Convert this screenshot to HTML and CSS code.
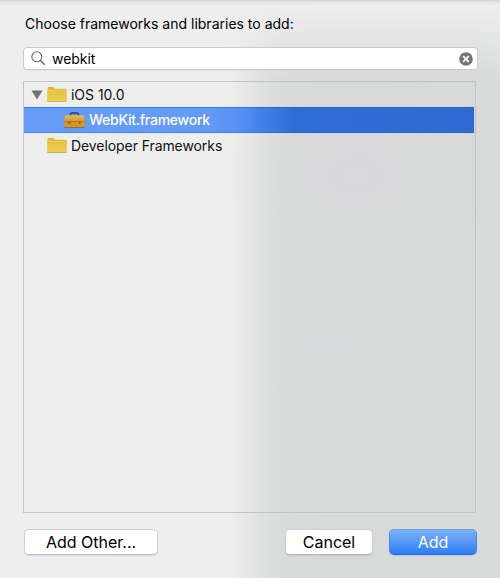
FILE: index.html
```html
<!DOCTYPE html>
<html lang="en">
<head>
<meta charset="utf-8">
<title>Choose frameworks and libraries</title>
<link rel="stylesheet" href="styles.css">
</head>
<body>
<main class="sheet">
  <h1 class="title"><span>Choose frameworks and libraries to add:</span></h1>
  <div class="search">
    <svg class="magnifier" width="15" height="15" viewBox="0 0 15 15"><circle cx="5.8" cy="5.8" r="5" fill="none" stroke="#646464" stroke-width="1.1"/><path d="M9.5 9.5L13.8 13.7" stroke="#646464" stroke-width="1.3"/></svg>
    <span class="query">webkit</span>
    <svg class="clear" width="14" height="14" viewBox="0 0 14 14"><circle cx="7" cy="7" r="6.8" fill="#757575"/><path d="M4.2 4.2L9.8 9.8M9.8 4.2L4.2 9.8" stroke="#fff" stroke-width="1.9"/></svg>
  </div>
  <div class="list">
    <div class="row">
      <svg class="disclosure" width="12" height="10" viewBox="0 0 12 10"><path d="M.5 .5H11.5L6 9.5Z" fill="#717171"/></svg>
      <svg class="folder" width="20" height="17" viewBox="0 0 20 17"><defs><linearGradient id="folderFill" x2="0" y2="1"><stop stop-color="#e6c238"/><stop offset="1" stop-color="#edcf57"/></linearGradient></defs><path d="M.5 2Q.5 1 1.5 1H6L8 2.8H18.5Q19.5 2.8 19.5 3.8V15H.5Z" fill="#ddb838"/><path d="M.5 4.3H19.5V15H.5Z" fill="url(#folderFill)"/><path d="M.5 4.3H19.5" stroke="#efd66b" stroke-width=".7"/><path d="M.3 15.4H19.7" stroke="#c9a94e" stroke-width="1"/></svg>
      <span class="ios">iOS 10.0</span>
    </div>
    <div class="row selected">
      <svg class="toolbox" width="21" height="17" viewBox="0 0 21 17"><defs><linearGradient id="caseFill" x2="0" y2="1"><stop stop-color="#ebbb4d"/><stop offset=".5" stop-color="#d4982c"/><stop offset="1" stop-color="#cf9230"/></linearGradient></defs><path d="M6.5 4V2.7Q6.5 1 8.2 1H12.8Q14.5 1 14.5 2.7V4" fill="none" stroke="#263e63" stroke-width="1.4"/><path d="M2.2 3.2H18.8Q20 3.2 20.3 5L20.8 10V15.8H.2V10L.7 5Q1 3.2 2.2 3.2Z" fill="url(#caseFill)"/><path d="M.3 9.6H20.7" stroke="#a66f22" stroke-width=".9"/><path d="M.2 15.6H20.8" stroke="#8c642d" stroke-width=".9"/><path d="M4 10.2H6.5L5.2 12.3ZM14.5 10.2H17L15.8 12.3Z" fill="#5d4b36"/></svg>
      <span class="webkit">WebKit.framework</span>
    </div>
    <div class="row developer">
      <svg class="folder" width="20" height="17" viewBox="0 0 20 17"><path d="M.5 2Q.5 1 1.5 1H6L8 2.8H18.5Q19.5 2.8 19.5 3.8V15H.5Z" fill="#ddb838"/><path d="M.5 4.3H19.5V15H.5Z" fill="url(#folderFill)"/><path d="M.5 4.3H19.5" stroke="#efd66b" stroke-width=".7"/><path d="M.3 15.4H19.7" stroke="#c9a94e" stroke-width="1"/></svg>
      <span class="dev">Developer Frameworks</span>
    </div>
  </div>
  <footer class="actions">
    <button class="button other"><span>Add Other...</span></button>
    <button class="button cancel"><span>Cancel</span></button>
    <button class="button primary"><span>Add</span></button>
  </footer>
</main>
</body>
</html>
```
FILE: styles.css
```css
* { box-sizing: border-box; }
body {
  margin: 0;
  font-family: Inter, "Liberation Sans", sans-serif;
  color: #111;
}
.sheet {
  width: 500px;
  height: 578px;
  padding: 14px 22px 0 23px;
  background:
    linear-gradient(#d2d2d2, rgba(225, 225, 225, .6) 2px, rgba(238, 238, 238, 0) 5px),
    linear-gradient(#eee 5px, rgba(238, 238, 238, .75) 25px, rgba(238, 238, 238, 0) 80px),
    linear-gradient(90deg, #eee 230px, rgba(236, 236, 236, .75) 245px, rgba(230, 230, 232, .4) 268px, rgba(222, 222, 225, .2) 285px, rgba(218, 218, 222, 0) 325px),
    radial-gradient(ellipse 150px 110px at 355px 175px, rgba(216, 215, 218, .9), rgba(216, 215, 218, 0)),
    radial-gradient(ellipse 130px 90px at 330px 345px, rgba(216, 216, 218, .8), rgba(216, 216, 218, 0)),
    linear-gradient(90deg, #d7dad8 470px, #d9dbdb 500px);
}
.title {
  height: 20px;
  margin: 0 0 13px 2px;
  font-size: 14px;
  font-weight: 400;
  line-height: 20px;
  color: #000;
}
.search {
  display: flex;
  align-items: center;
  height: 23px;
  padding: 0 4px 0 7px;
  border: 1px solid #cbcbcb;
  border-radius: 4px;
  background: #fff;
  box-shadow: 0 1px 0 rgba(0, 0, 0, .04);
}
.query {
  flex: 1;
  margin-left: 6px;
  font-size: 14px;
  line-height: 20px;
  letter-spacing: -.05px;
  color: #000;
}
.list {
  width: 453px;
  height: 432px;
  margin-top: 11px;
  border: 1px solid #c3c4c4;
}
.row {
  display: flex;
  align-items: center;
  height: 25px;
  padding-left: 7px;
  font-size: 14px;
  line-height: 20px;
}
.folder { margin: 0 4px 0 4px; }
.selected {
  width: 450px;
  height: 26px;
  padding-left: 40px;
  color: #fff;
  font-weight: 500;
  background: linear-gradient(90deg, #669bf9 0, #639af8 185px, #5790f4 215px, #3f7fe8 240px, #2f6dd6 270px, #2e6bd3 100%);
  box-shadow: inset 0 1px 0 rgba(0, 90, 215, .45), inset 0 -1px 0 rgba(0, 80, 210, .3);
}
.webkit {
  margin-left: 4px;
  letter-spacing: -.25px;
}
.ios { letter-spacing: -.03px; }
.dev { letter-spacing: -.08px; }
.developer { padding-left: 19px; }
.actions {
  display: flex;
  width: 454px;
  padding: 16px 0 0 1px;
}
.button {
  height: 26px;
  padding: 0;
  border: 1px solid #cfcfcf;
  border-bottom-color: #b9b9b9;
  border-radius: 5px;
  background: #fff;
  box-shadow: 0 1px 1px rgba(0, 0, 0, .08);
  font: 16px/24px Inter, "Liberation Sans", sans-serif;
  color: #000;
}
.other { width: 134px; }
.cancel { width: 88px; margin-left: auto; }
.primary {
  width: 88px;
  margin-left: 16px;
  border-color: #669fe6 #4688ed #1b6bed;
  background: linear-gradient(#7bb3f5, #2e7cf7);
  color: #fff;
}
```
